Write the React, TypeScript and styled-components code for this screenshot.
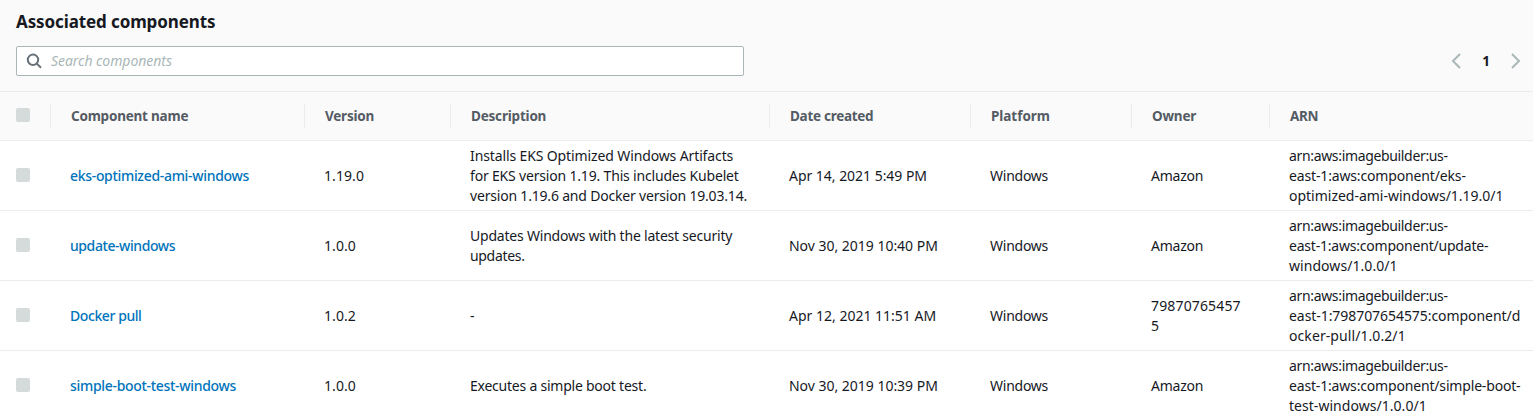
import React from "react";
import styled, { createGlobalStyle } from "styled-components";

const GlobalStyle = createGlobalStyle`
  * { box-sizing: border-box; }
  body {
    margin: 0;
    background: #fff;
    color: #16191f;
    font: 14px/20px "Noto Sans", sans-serif;
    overflow: hidden;
  }
`;

const Panel = styled.section`
  width: 1533px;
  height: 417px;
  overflow: hidden;
`;

const PanelHeader = styled.header`
  height: 92px;
  padding: 10px 9px 0 16px;
  background: #fafafa;
  border-bottom: 1px solid #eaeded;
`;

const Title = styled.h2`
  margin: 0 0 12px;
  font-size: 17px;
  line-height: 24px;
  font-weight: 700;
  letter-spacing: -0.11px;
`;

const Toolbar = styled.div`
  display: flex;
  justify-content: space-between;
  align-items: center;
`;

const SearchBox = styled.label`
  display: flex;
  align-items: center;
  gap: 8px;
  width: 728px;
  height: 30px;
  padding: 0 10px 0 9px;
  background: #fff;
  border: 1px solid #aab7b8;
  border-radius: 2px;
`;

const SearchInput = styled.input`
  flex: 1;
  padding: 0;
  border: 0;
  outline: 0;
  background: none;
  font: italic 14px/20px "Noto Sans", sans-serif;
  letter-spacing: -0.05px;
  &::placeholder { color: #aab7b8; opacity: 1; }
`;

const Pagination = styled.nav`
  display: flex;
  align-items: center;
`;

const PageArrow = styled.button`
  display: flex;
  padding: 0;
  border: 0;
  background: none;
`;

const PageNumber = styled.span`
  width: 44px;
  text-align: center;
  font-weight: 700;
  font-size: 13.5px;
`;

const columns = "51px 254px 146px 319px 201px 161px 138px 1fr";

const HeadRow = styled.div`
  display: grid;
  grid-template-columns: ${columns};
  align-items: center;
  height: 49px;
  background: #fafafa;
  border-bottom: 1px solid #eaeded;
`;

const HeadCell = styled.div<{ $track: number; $last?: boolean }>`
  height: 24px;
  padding-left: 20px;
  line-height: 24px;
  font-size: 13.5px;
  font-weight: 700;
  color: #545b64;
  letter-spacing: ${(p) => p.$track}px;
  border-right: ${(p) => (p.$last ? "0" : "1px solid #eaeded")};
`;

const SelectHead = styled.div`
  display: flex;
  align-items: center;
  height: 24px;
  padding: 0 0 2px 16px;
  border-right: 1px solid #eaeded;
`;

const Row = styled.div`
  display: grid;
  grid-template-columns: ${columns};
  align-items: center;
  height: 70px;
  border-bottom: 1px solid #eaeded;
`;

const SelectCell = styled.div`
  display: flex;
  padding: 0 0 1px 16px;
`;

const Checkbox = styled.span`
  width: 14px;
  height: 14px;
  border-radius: 2px;
  background: #d5dbdb;
`;

const Cell = styled.div`
  padding: 1px 0 0 19px;
  white-space: nowrap;
`;

const Line = styled.div<{ $track: number }>`
  letter-spacing: ${(p) => p.$track}px;
`;

const NameLink = styled.a<{ $track: number }>`
  color: #0073bb;
  font-weight: 550;
  letter-spacing: ${(p) => p.$track}px;
`;

type Text = [string, number];

interface Item {
  name: Text;
  version: Text;
  description: Text[];
  created: Text;
  owner: Text[];
  arn: Text[];
}

const heads: Text[] = [
  ["Component name", -0.22],
  ["Version", -0.22],
  ["Description", -0.2],
  ["Date created", -0.28],
  ["Platform", -0.04],
  ["Owner", -0.2],
  ["ARN", -0.3],
];

const items: Item[] = [
  {
    name: ["eks-optimized-ami-windows", -0.32],
    version: ["1.19.0", 0.08],
    description: [
      ["Installs EKS Optimized Windows Artifacts", -0.12],
      ["for EKS version 1.19. This includes Kubelet", -0.18],
      ["version 1.19.6 and Docker version 19.03.14.", -0.19],
    ],
    created: ["Apr 14, 2021 5:49 PM", -0.03],
    owner: [["Amazon", -0.25]],
    arn: [
      ["arn:aws:imagebuilder:us-", -0.34],
      ["east-1:aws:component/eks-", -0.15],
      ["optimized-ami-windows/1.19.0/1", -0.01],
    ],
  },
  {
    name: ["update-windows", -0.42],
    version: ["1.0.0", 0.08],
    description: [
      ["Updates Windows with the latest security", -0.21],
      ["updates.", -0.32],
    ],
    created: ["Nov 30, 2019 10:40 PM", -0.02],
    owner: [["Amazon", -0.25]],
    arn: [
      ["arn:aws:imagebuilder:us-", -0.34],
      ["east-1:aws:component/update-", -0.21],
      ["windows/1.0.0/1", 0.06],
    ],
  },
  {
    name: ["Docker pull", -0.42],
    version: ["1.0.2", 0.08],
    description: [["-", 0]],
    created: ["Apr 12, 2021 11:51 AM", 0],
    owner: [["79870765457", 0.15], ["5", 0]],
    arn: [
      ["arn:aws:imagebuilder:us-", -0.34],
      ["east-1:798707654575:component/d", -0.06],
      ["ocker-pull/1.0.2/1", 0.08],
    ],
  },
  {
    name: ["simple-boot-test-windows", -0.31],
    version: ["1.0.0", 0.08],
    description: [["Executes a simple boot test.", -0.23]],
    created: ["Nov 30, 2019 10:39 PM", -0.02],
    owner: [["Amazon", -0.25]],
    arn: [
      ["arn:aws:imagebuilder:us-", -0.34],
      ["east-1:aws:component/simple-boot-", -0.17],
      ["test-windows/1.0.0/1", 0.04],
    ],
  },
];

const SearchIcon = () => (
  <svg width="17" height="16" viewBox="0 0 17 16" fill="none" stroke="#687078" strokeWidth="2">
    <circle cx="7" cy="6.8" r="5.2" />
    <path d="M10.8 10.6 15 14.8" />
  </svg>
);

const Chevron = ({ d }: { d: string }) => (
  <svg width="16" height="16" viewBox="0 0 16 16" fill="none" stroke="#aab7b8" strokeWidth="2">
    <path d={d} />
  </svg>
);

const Lines = ({ text }: { text: Text[] }) => (
  <>
    {text.map(([value, track]) => (
      <Line key={value} $track={track}>{value}</Line>
    ))}
  </>
);

export default function App() {
  return (
    <Panel>
      <GlobalStyle />
      <PanelHeader>
        <Title>Associated components</Title>
        <Toolbar>
          <SearchBox>
            <SearchIcon />
            <SearchInput placeholder="Search components" />
          </SearchBox>
          <Pagination>
            <PageArrow aria-label="Previous page"><Chevron d="M12 1 5 8l7 7" /></PageArrow>
            <PageNumber>1</PageNumber>
            <PageArrow aria-label="Next page"><Chevron d="M4 1l7 7-7 7" /></PageArrow>
          </Pagination>
        </Toolbar>
      </PanelHeader>
      <HeadRow>
        <SelectHead><Checkbox /></SelectHead>
        {heads.map(([label, track], i) => (
          <HeadCell key={label} $track={track} $last={i === heads.length - 1}>{label}</HeadCell>
        ))}
      </HeadRow>
      {items.map((item) => (
        <Row key={item.name[0]}>
          <SelectCell><Checkbox /></SelectCell>
          <Cell><NameLink $track={item.name[1]}>{item.name[0]}</NameLink></Cell>
          <Cell><Lines text={[item.version]} /></Cell>
          <Cell><Lines text={item.description} /></Cell>
          <Cell><Lines text={[item.created]} /></Cell>
          <Cell><Lines text={[["Windows", -0.25]]} /></Cell>
          <Cell><Lines text={item.owner} /></Cell>
          <Cell><Lines text={item.arn} /></Cell>
        </Row>
      ))}
    </Panel>
  );
}
